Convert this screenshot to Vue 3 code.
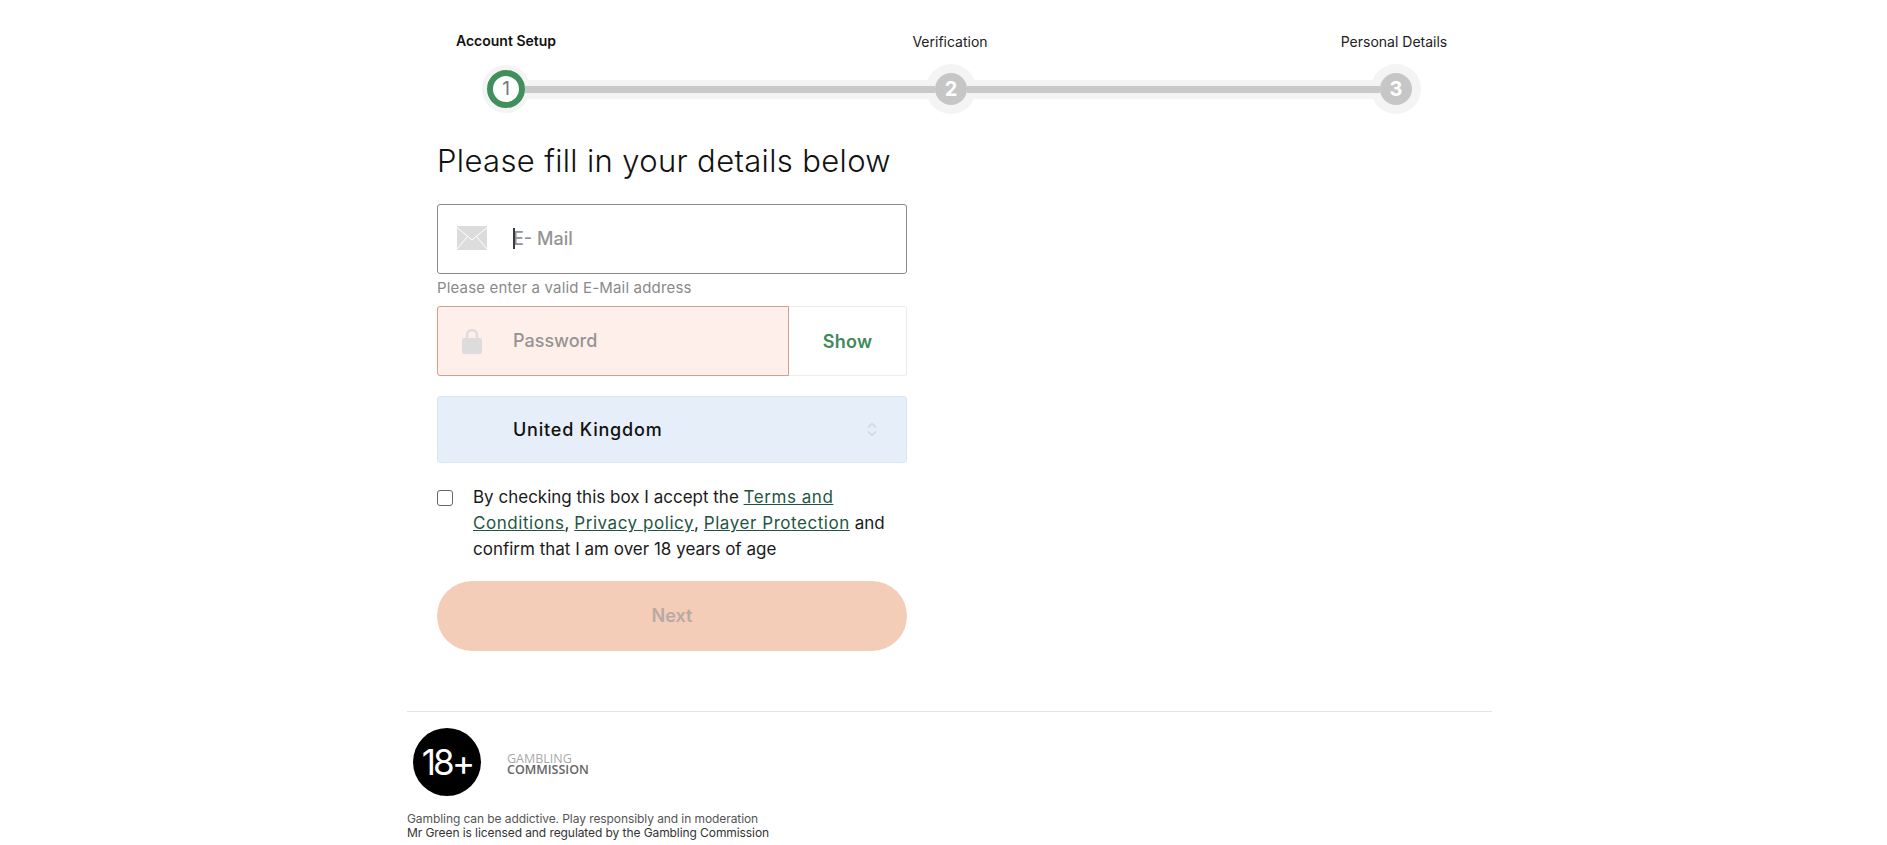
<template>
  <div class="page">
    <div class="stepper">
      <div class="labels">
        <span v-for="(step, i) in steps" :key="step" class="label" :class="{ active: i === 0 }">{{ step }}</span>
      </div>
      <div class="track">
        <template v-for="(step, i) in steps" :key="step">
          <div v-if="i > 0" class="connector"></div>
          <div class="dot" :class="{ active: i === 0 }">{{ i + 1 }}</div>
        </template>
      </div>
    </div>

    <form class="form" @submit.prevent>
      <h1>Please fill in your details below</h1>

      <div class="field email">
        <svg class="icon mail" width="30" height="24" viewBox="0 0 30 24">
          <path d="M0 0h30v24H0z" fill="#dcdcdc" />
          <path d="M0 1.5 15 14 30 1.5M0 23l10.5-12.5M30 23 19.500 10.500" fill="none" stroke="#fff" stroke-width="1" />
        </svg>
        <input type="text" placeholder="E- Mail" />
        <span class="caret"></span>
      </div>
      <p class="hint">Please enter a valid E-Mail address</p>

      <div class="password-row">
        <div class="field password">
          <svg class="icon lock" width="20" height="26" viewBox="0 0 20 26">
            <path d="M5 11V7a5 5 0 0 1 10 0v4" fill="none" stroke="#dcdcdc" stroke-width="2.400" />
            <rect y="10" width="20" height="16" rx="2" fill="#dcdcdc" />
          </svg>
          <input type="password" placeholder="Password" />
        </div>
        <button type="button" class="show">Show</button>
      </div>

      <div class="country">
        <select>
          <option>United Kingdom</option>
        </select>
        <svg class="arrows" width="10" height="15" viewBox="0 0 10 15">
          <path d="M1 5.500 5 1.500l4 4M1 9.500l4 4 4-4" fill="none" stroke="#cfd3d6" stroke-width="1.200" />
        </svg>
      </div>

      <label class="consent">
        <input type="checkbox" />
        <span>By checking this box I accept the <a href="#">Terms and Conditions</a>, <a href="#">Privacy policy</a>, <a href="#">Player Protection</a> and confirm that I am over 18 years of age</span>
      </label>

      <button type="submit" class="next" disabled>Next</button>
    </form>

    <footer class="footer">
      <div class="badges">
        <div class="age">18+</div>
        <div class="commission">
          <span>GAMBLING</span>
          <strong>COMMISSION</strong>
        </div>
      </div>
      <p class="legal">Gambling can be addictive. Play responsibly and in moderation</p>
      <p class="legal dark">Mr Green is licensed and regulated by the Gambling Commission</p>
    </footer>
  </div>
</template>

<script setup>
const steps = ['Account Setup', 'Verification', 'Personal Details']
</script>

<style>
body {
  background: #fff;
}
</style>

<style scoped>
.page {
  width: 1085px;
  margin-left: 407px;
  font-family: Inter, 'Noto Sans', sans-serif;
  color: #111;
}

.stepper {
  width: 1008px;
  margin-left: 39px;
  padding-top: 32px;
}

.labels {
  display: flex;
  justify-content: space-between;
}

.label {
  width: 120px;
  text-align: center;
  font-size: 14px;
  line-height: 20px;
  white-space: nowrap;
  color: #222;
}

.label.active {
  position: relative;
  top: -1px;
  font-weight: 600;
  color: #111;
}

.track {
  isolation: isolate;
  display: flex;
  align-items: center;
  height: 48px;
  margin-top: 13px;
  padding: 0 42px 0 41px;
}

.connector {
  position: relative;
  flex: 1;
  height: 7px;
  border-block: 6px solid #f4f4f4;
  background: #c9c9c9;
}

.active + .connector {
  flex: 0 0 410px;
}

.dot {
  position: relative;
  flex: none;
  box-sizing: border-box;
  width: 32px;
  height: 32px;
  border-radius: 50%;
  background: #c6c6c6;
  color: #fff;
  font-size: 20px;
  font-weight: 700;
  line-height: 32px;
  text-align: center;
}

/* halo sits behind the connector line */
.dot::before {
  content: '';
  position: absolute;
  inset: -9px;
  z-index: -1;
  border-radius: 50%;
  background: #f4f4f4;
}

.dot.active {
  width: 38px;
  height: 38px;
  border: 6px solid #418f5c;
  background: #fff;
  color: #777;
  font-size: 19px;
  font-weight: 400;
  line-height: 26px;
}

.dot.active::before {
  inset: -11px;
}

.form {
  width: 470px;
  margin-left: 30px;
}

h1 {
  margin: 28px 0 23px;
  font-size: 31px;
  font-weight: 350;
  letter-spacing: 0.35px;
  line-height: 40px;
  color: #111;
  white-space: nowrap;
}

.field {
  position: relative;
  display: flex;
  align-items: center;
  box-sizing: border-box;
  height: 70px;
  border-radius: 3px;
}

.email {
  border: 1px solid #8a8a8a;
}

.icon {
  flex: none;
  margin-left: 19px;
}

.mail {
  margin-top: -3px;
}

.lock {
  margin-left: 24px;
  margin-top: -1px;
}

.field input {
  flex: 1;
  min-width: 0;
  height: 100%;
  padding: 0 0 2px;
  box-sizing: border-box;
  border: 0;
  outline: 0;
  background: transparent;
  font: 500 18px Inter, 'Noto Sans', sans-serif;
  color: #111;
}

.email input {
  margin-left: 26px;
}

.password input {
  margin-left: 31px;
}

.field input::placeholder {
  color: #949494;
  opacity: 1;
}

.caret {
  position: absolute;
  left: 75px;
  top: 23px;
  width: 2px;
  height: 21px;
  background: #3a3a3a;
}

.hint {
  margin: 4px 0 8px;
  font-size: 15px;
  letter-spacing: 0.17px;
  line-height: 20px;
  color: #8a8a8a;
}

.password-row {
  display: flex;
  height: 70px;
}

.password {
  width: 352px;
  border: 1px solid #d39f8e;
  border-radius: 3px 0 0 3px;
  background: #ffefea;
}

.show {
  flex: 1;
  border: 1px solid #ececec;
  border-left: 0;
  border-radius: 0 3px 3px 0;
  background: #fff;
  font: 600 18px Inter, 'Noto Sans', sans-serif;
  letter-spacing: 0.3px;
  color: #3f8a5c;
}

.country {
  position: relative;
  margin-top: 20px;
}

.country select {
  display: block;
  box-sizing: border-box;
  width: 100%;
  height: 67px;
  padding: 0 0 0 75px;
  border: 1px solid #dbe6f2;
  border-radius: 3px;
  outline: 0;
  appearance: none;
  background: #e6eef9;
  font: 500 18px Inter, 'Noto Sans', sans-serif;
  letter-spacing: 0.8px;
  color: #111;
}

.arrows {
  position: absolute;
  right: 30px;
  top: 26px;
}

.consent {
  display: flex;
  margin-top: 21px;
  font-size: 17px;
  line-height: 26px;
  color: #1a1a1a;
}

.consent input {
  flex: none;
  box-sizing: border-box;
  width: 16px;
  height: 16px;
  margin: 6px 20px 0 0;
  appearance: none;
  border: 1px solid #666;
  border-radius: 3px;
  background: #fff;
}

.consent a {
  color: #1f5642;
  letter-spacing: 0.55px;
}

.next {
  display: block;
  width: 100%;
  height: 70px;
  margin-top: 19px;
  padding-bottom: 2px;
  border: 0;
  border-radius: 35px;
  background: #f3cdb8;
  font: 600 18px Inter, 'Noto Sans', sans-serif;
  color: #b6aaa3;
}

.footer {
  margin-top: 60px;
  padding-top: 16px;
  border-top: 1px solid #e4e4e4;
}

.badges {
  display: flex;
  align-items: center;
  margin-bottom: 16px;
  padding-left: 6px;
}

.age {
  flex: none;
  width: 68px;
  height: 68px;
  border-radius: 50%;
  background: #000;
  color: #fff;
  font-size: 35px;
  letter-spacing: -2.800px;
  line-height: 68px;
  text-align: center;
}

.commission {
  display: flex;
  flex-direction: column;
  margin-left: 26px;
  padding-top: 4px;
  font-family: 'Open Sans', sans-serif;
  font-size: 12.500px;
  line-height: 10px;
}

.commission span {
  color: #a9a9a9;
  padding-bottom: 1px;
}

.commission strong {
  font-weight: 600;
  color: #666;
}

.legal {
  margin: 0;
  font-size: 12px;
  letter-spacing: -0.08px;
  line-height: 14px;
  color: #555;
}

.legal.dark {
  color: #333;
}
</style>
